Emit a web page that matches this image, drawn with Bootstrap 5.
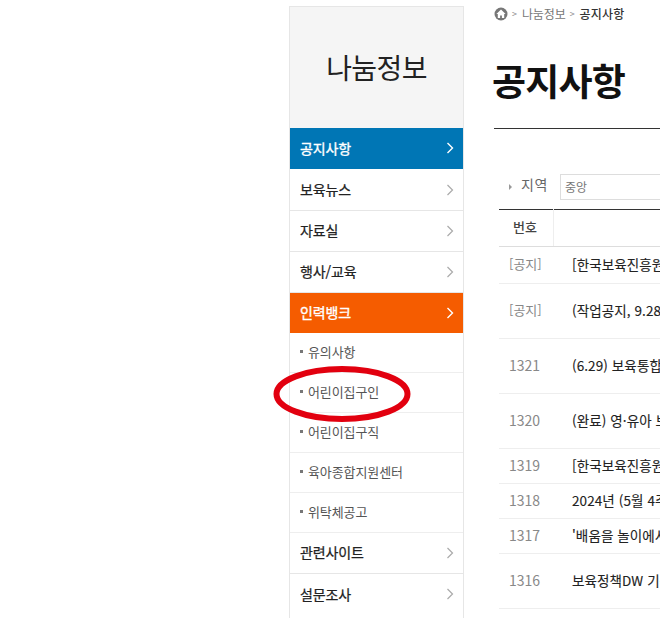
<!DOCTYPE html>
<html lang="ko">
<head>
<meta charset="utf-8">
<title>공지사항</title>
<link href="https://cdn.jsdelivr.net/npm/bootstrap@5.3.0/dist/css/bootstrap.min.css" rel="stylesheet">
<style>
html,body{height:618px;overflow:hidden;background:#fff}
body{font-family:"Noto Sans CJK KR","Liberation Sans",sans-serif;color:#333;font-size:13px;position:relative}
.shell{padding-left:289px;width:660px;height:618px;overflow:hidden}
.sidebar{width:175px;flex:none;margin-top:6px;border:1px solid #e6e6e6;border-bottom:0;height:612px}
.side-head{height:121px;background:#f5f5f5;font-size:28px;color:#222;letter-spacing:-.6px;padding-bottom:2px}
.m-item{height:41px;padding:0 9px 1px 10px;font-size:14px;font-weight:400;-webkit-text-stroke:.25px currentColor;color:#222;border-bottom:1px solid #e6e6e6;text-decoration:none;letter-spacing:-.1px}
.m-item svg{stroke:#aaa}
.m-blue{background:#0076b5;color:#fff;border-bottom:1px solid #fff;height:42px;-webkit-text-stroke:.35px #fff}
.m-orange{background:#f55c00;color:#fff;border-bottom:0;height:40px;-webkit-text-stroke:.35px #fff}
.m-blue svg,.m-orange svg{stroke:#fff}
.s-item{height:40px;padding:0 0 2px 10px;font-size:13px;color:#555;border-bottom:1px solid #eee;text-decoration:none;letter-spacing:-.1px}
.s-dot{width:3px;height:3px;background:#777;margin-right:5px;flex:none}
.content{flex:1 0 auto;width:600px;padding-left:30px}
.crumbs{height:28px;font-size:12px;color:#777;gap:4px;letter-spacing:-.1px}
.crumbs b{font-weight:500;color:#333;letter-spacing:.2px}
.crumb-sep{font-size:9px;color:#888;margin-right:1px}
.page-title{font-size:37px;font-weight:700;color:#111;height:100px;margin:0 0 0 -2px;padding-top:25px;line-height:54px;letter-spacing:-.8px}
.page-rule{border-top:1px solid #333;height:44px}
.filter{height:37px;padding:0 0 8px 15px;font-size:14px;color:#666}
.tri{width:0;height:0;border-left:3px solid #999;border-top:3px solid transparent;border-bottom:3px solid transparent;margin-right:9px}
.filter-label{width:39px;letter-spacing:.5px;margin-top:-4px}
.filter-box{width:200px;height:26px;border:1px solid #ddd;padding-left:4px;font-size:12px;color:#777;display:flex;align-items:center}
.notice{margin:0 0 0 5px;width:600px;table-layout:fixed;border-top:1px solid #333;font-size:13px}
.notice th,.notice td{padding:0 0 2px;vertical-align:middle;border-bottom:1px solid #eee;white-space:nowrap;overflow:hidden;box-shadow:none;color:#333}
.notice th{height:37px;font-weight:500;color:#444;border-bottom-color:#ddd}
.notice th.num-h{border-right:1px solid #eee;padding-left:14px;font-size:13px}
.col-no{width:54px}
.num{padding-left:10px!important;color:#888!important;font-weight:400;font-size:14px}
.tag{font-size:13px;color:#888}
.ttl{padding-left:19px!important;font-weight:400;-webkit-text-stroke:.12px #222;color:#222!important;font-size:13.5px;letter-spacing:.1px}
.h35{height:35px}.h37{height:37px}.h55{height:55px}
.mark-ring{position:absolute;left:272px;top:366px;pointer-events:none}
</style>
</head>
<body>
<div class="shell d-flex">
  <nav class="sidebar">
    <div class="side-head d-flex align-items-center justify-content-center">나눔정보</div>
    <a class="m-item m-blue d-flex align-items-center justify-content-between" href="#">공지사항<svg width="8" height="12" viewBox="0 0 8 12" fill="none" stroke-width="1.4"><path d="M1.5 1l5 5-5 5"/></svg></a>
    <a class="m-item d-flex align-items-center justify-content-between" href="#">보육뉴스<svg width="8" height="12" viewBox="0 0 8 12" fill="none" stroke-width="1.2"><path d="M1.5 1l5 5-5 5"/></svg></a>
    <a class="m-item d-flex align-items-center justify-content-between" href="#">자료실<svg width="8" height="12" viewBox="0 0 8 12" fill="none" stroke-width="1.2"><path d="M1.5 1l5 5-5 5"/></svg></a>
    <a class="m-item d-flex align-items-center justify-content-between" href="#">행사/교육<svg width="8" height="12" viewBox="0 0 8 12" fill="none" stroke-width="1.2"><path d="M1.5 1l5 5-5 5"/></svg></a>
    <a class="m-item m-orange d-flex align-items-center justify-content-between" href="#">인력뱅크<svg width="8" height="12" viewBox="0 0 8 12" fill="none" stroke-width="1.4"><path d="M1.5 1l5 5-5 5"/></svg></a>
    <a class="s-item d-flex align-items-center" href="#"><span class="s-dot"></span>유의사항</a>
    <a class="s-item d-flex align-items-center" href="#"><span class="s-dot"></span>어린이집구인</a>
    <a class="s-item d-flex align-items-center" href="#"><span class="s-dot"></span>어린이집구직</a>
    <a class="s-item d-flex align-items-center" href="#"><span class="s-dot"></span>육아종합지원센터</a>
    <a class="s-item d-flex align-items-center" href="#"><span class="s-dot"></span>위탁체공고</a>
    <a class="m-item d-flex align-items-center justify-content-between" href="#">관련사이트<svg width="8" height="12" viewBox="0 0 8 12" fill="none" stroke-width="1.2"><path d="M1.5 1l5 5-5 5"/></svg></a>
    <a class="m-item border-bottom-0 d-flex align-items-center justify-content-between" href="#">설문조사<svg width="8" height="12" viewBox="0 0 8 12" fill="none" stroke-width="1.2"><path d="M1.5 1l5 5-5 5"/></svg></a>
  </nav>
  <main class="content">
    <div class="crumbs d-flex align-items-center">
      <svg width="14" height="14" viewBox="0 0 14 14"><circle cx="7" cy="7" r="6.5" fill="#777"/><path d="M7 2.6L2.4 7h1.4v4h2.3V8.4h1.8V11h2.3V7h1.4z" fill="#fff"/></svg>
      <span class="crumb-sep">&gt;</span><span>나눔정보</span><span class="crumb-sep">&gt;</span><b>공지사항</b>
    </div>
    <h1 class="page-title">공지사항</h1>
    <div class="page-rule"></div>
    <div class="filter d-flex align-items-center"><span class="tri"></span><span class="filter-label">지역</span><div class="filter-box">중앙</div></div>
    <table class="table notice">
      <colgroup><col class="col-no"><col></colgroup>
      <thead><tr><th class="num-h">번호</th><th></th></tr></thead>
      <tbody>
        <tr class="h37"><td class="num tag">[공지]</td><td class="ttl">[한국보육진흥원] 안내</td></tr>
        <tr class="h55"><td class="num tag">[공지]</td><td class="ttl">(작업공지, 9.28) 안내</td></tr>
        <tr class="h55"><td class="num">1321</td><td class="ttl">(6.29) 보육통합 안내</td></tr>
        <tr class="h55"><td class="num">1320</td><td class="ttl">(완료) 영·유아 보육 안내</td></tr>
        <tr class="h35"><td class="num">1319</td><td class="ttl">[한국보육진흥원] 안내</td></tr>
        <tr class="h35"><td class="num">1318</td><td class="ttl">2024년 (5월 4주) 안내</td></tr>
        <tr class="h35"><td class="num">1317</td><td class="ttl">'배움을 놀이에서 안내</td></tr>
        <tr class="h55"><td class="num">1316</td><td class="ttl">보육정책DW 기능 안내</td></tr>
      </tbody>
    </table>
  </main>
</div>
<svg class="mark-ring" width="142" height="60" viewBox="0 0 142 60"><ellipse cx="70" cy="28" rx="65.5" ry="25" fill="none" stroke="#e2000f" stroke-width="6"/></svg>
</body>
</html>
